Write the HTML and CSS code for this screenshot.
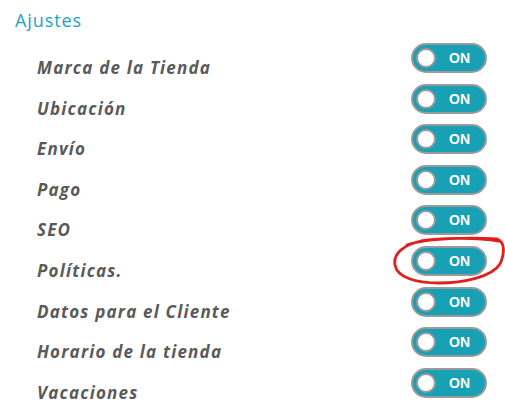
FILE: index.html
```html
<!DOCTYPE html>
<html lang="es">
<head>
<meta charset="utf-8">
<link rel="stylesheet" href="styles.css">
</head>
<body>
<div class="page">
  <h2 class="title">Ajustes</h2>
  <ul class="list">
    <li class="row"><span class="label">Marca de la Tienda</span><span class="toggle"><span class="knob"></span><span class="on">ON</span></span></li>
    <li class="row"><span class="label">Ubicación</span><span class="toggle"><span class="knob"></span><span class="on">ON</span></span></li>
    <li class="row"><span class="label">Envío</span><span class="toggle"><span class="knob"></span><span class="on">ON</span></span></li>
    <li class="row"><span class="label">Pago</span><span class="toggle"><span class="knob"></span><span class="on">ON</span></span></li>
    <li class="row"><span class="label">SEO</span><span class="toggle"><span class="knob"></span><span class="on">ON</span></span></li>
    <li class="row"><span class="label">Políticas.</span><span class="toggle marked"><span class="knob"></span><span class="on">ON</span>
      <svg class="circle" width="124" height="50" viewBox="0 0 124 50"><path d="M26 9 C 45 2, 90 1, 116 3 C 124 6, 124 17, 119 28 C 111 41, 82 47, 58 47 C 34 47, 16 41, 14 29 C 12 18, 22 9, 40 5 C 62 1, 98 2, 118 5" fill="none" stroke="#e0201f" stroke-width="2.8" stroke-linecap="round" stroke-linejoin="round"/></svg></span></li>
    <li class="row"><span class="label">Datos para el Cliente</span><span class="toggle"><span class="knob"></span><span class="on">ON</span></span></li>
    <li class="row"><span class="label">Horario de la tienda</span><span class="toggle"><span class="knob"></span><span class="on">ON</span></span></li>
    <li class="row"><span class="label">Vacaciones</span><span class="toggle"><span class="knob"></span><span class="on">ON</span></span></li>
  </ul>
</div>
</body>
</html>
```
FILE: styles.css
```css
html, body {
  margin: 0;
  padding: 0;
  background: #fff;
}
.page {
  padding: 8px 18px 0 15px;
  font-family: "Open Sans", "DejaVu Sans", sans-serif;
}
.title {
  margin: 0;
  font-size: 18px;
  font-weight: 400;
  line-height: 25px;
  letter-spacing: 0.9px;
  color: #1aa3bf;
}
.list {
  list-style: none;
  margin: 10px 0 0 0;
  padding: 0 0 0 22px;
}
.row {
  display: flex;
  justify-content: space-between;
  align-items: flex-start;
  height: 40.6px;
}
.label {
  margin-top: 13px;
  font-size: 17px;
  line-height: 24px;
  font-weight: 700;
  font-style: italic;
  letter-spacing: 1.2px;
  color: #5a5a5a;
}
.toggle {
  position: relative;
  display: flex;
  align-items: center;
  box-sizing: border-box;
  width: 76px;
  height: 30px;
  border: 2px solid #9a9a9a;
  border-radius: 15px;
  background: #18a0b4;
  padding-left: 3px;
}
.knob {
  box-sizing: border-box;
  width: 20px;
  height: 20px;
  border-radius: 50%;
  background: #fff;
  border: 2px solid #9a9a9a;
}
.on {
  margin-left: 13px;
  color: #fff;
  font-family: "Liberation Sans", Arial, sans-serif;
  font-weight: 700;
  font-size: 14px;
}
.circle {
  position: absolute;
  left: -32px;
  top: -12px;
}
```
